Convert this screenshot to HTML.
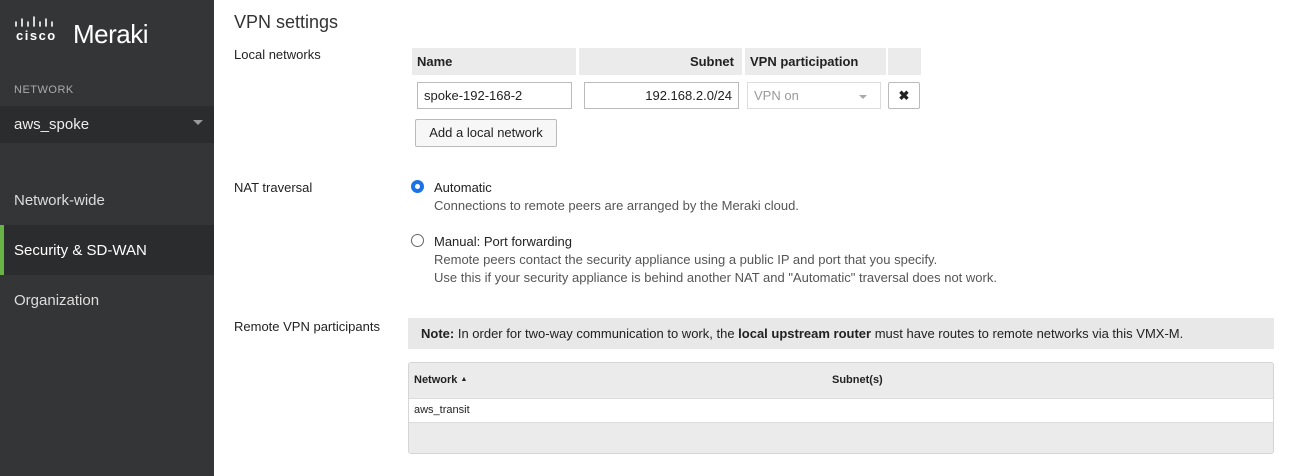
<!DOCTYPE html>
<html><head><style>
*{box-sizing:border-box;margin:0;padding:0}
body{width:1292px;height:476px;overflow:hidden;background:#fff;font-family:"Liberation Sans",sans-serif;font-size:13px;color:#222;position:relative}
.sb{position:absolute;left:0;top:0;width:214px;height:476px;background:#343537;color:#ddd}
.abs{position:absolute}
.lbl{position:absolute;left:234px;font-size:13px;color:#222}
.inp{position:absolute;height:27px;border:1px solid #bbb;background:#fff;font-size:13px;line-height:25px;padding:0 6px}
</style></head><body>
<div class="sb">
  <svg class="abs" style="left:15px;top:16px" width="46" height="12" viewBox="0 0 46 12">
    <g stroke="#fff" stroke-width="1.6" stroke-linecap="round">
      <line x1="1" y1="6" x2="1" y2="10"/><line x1="7" y1="3" x2="7" y2="10"/><line x1="13" y1="6" x2="13" y2="10"/><line x1="19" y1="1" x2="19" y2="10"/><line x1="25" y1="6" x2="25" y2="10"/><line x1="31" y1="3" x2="31" y2="10"/><line x1="37" y1="6" x2="37" y2="10"/>
    </g>
  </svg>
  <div class="abs" style="left:16px;top:28px;font-size:13px;font-weight:bold;color:#fff;letter-spacing:1.5px">cisco</div>
  <div class="abs" style="left:73px;top:19px;font-size:26px;color:#fff;font-weight:300;letter-spacing:-.5px">Meraki</div>
  <div class="abs" style="left:14px;top:84px;font-size:11px;color:#aaa;letter-spacing:.5px">NETWORK</div>
  <div class="abs" style="left:0;top:106px;width:214px;height:37px;background:#2b2c2e"></div>
  <div class="abs" style="left:14px;top:116px;font-size:15px;color:#eee">aws_spoke</div>
  <div class="abs" style="left:193px;top:120px;width:0;height:0;border-left:5px solid transparent;border-right:5px solid transparent;border-top:5px solid #999"></div>
  <div class="abs" style="left:14px;top:192px;font-size:15px;color:#ddd">Network-wide</div>
  <div class="abs" style="left:0;top:225px;width:214px;height:50px;background:#2b2c2e;border-left:4px solid #67b346"></div>
  <div class="abs" style="left:14px;top:242px;font-size:15px;color:#fff">Security &amp; SD-WAN</div>
  <div class="abs" style="left:14px;top:292px;font-size:15px;color:#ddd">Organization</div>
</div>
<div class="abs" style="left:234px;top:12px;font-size:18px;color:#333">VPN settings</div>
<div class="lbl" style="top:47px">Local networks</div>
<div class="abs" style="left:412px;top:48px;width:164px;height:27px;background:#ebebeb;font-weight:bold;padding:6px 5px">Name</div>
<div class="abs" style="left:579px;top:48px;width:163px;height:27px;background:#ebebeb;font-weight:bold;padding:6px 8px;text-align:right">Subnet</div>
<div class="abs" style="left:745px;top:48px;width:141px;height:27px;background:#ebebeb;font-weight:bold;padding:6px 5px">VPN participation</div>
<div class="abs" style="left:888px;top:48px;width:33px;height:27px;background:#ebebeb"></div>
<div class="inp" style="left:417px;top:82px;width:155px">spoke-192-168-2</div>
<div class="inp" style="left:584px;top:82px;width:155px;text-align:right">192.168.2.0/24</div>
<div class="inp" style="left:747px;top:82px;width:134px;color:#999;border-color:#ddd">VPN on</div>
<div class="abs" style="left:859px;top:95px;border-left:4px solid transparent;border-right:4px solid transparent;border-top:4px solid #aaa"></div>
<div class="inp" style="left:888px;top:82px;width:32px;text-align:center;font-weight:bold;border-radius:2px">✖</div>
<div class="inp" style="left:415px;top:119px;width:142px;height:28px;text-align:center;background:#f7f7f7;border-radius:2px;line-height:26px">Add a local network</div>
<div class="lbl" style="top:180px">NAT traversal</div>
<div class="abs" style="left:411px;top:180px;width:13px;height:13px;border-radius:50%;background:#1a73e8;border:1px solid #1a73e8"><div style="width:5px;height:5px;background:#fff;border-radius:50%;margin:3px"></div></div>
<div class="abs" style="left:434px;top:180px">Automatic</div>
<div class="abs" style="left:434px;top:198px;color:#555">Connections to remote peers are arranged by the Meraki cloud.</div>
<div class="abs" style="left:411px;top:234px;width:13px;height:13px;border-radius:50%;border:1px solid #666;background:#fff"></div>
<div class="abs" style="left:434px;top:234px">Manual: Port forwarding</div>
<div class="abs" style="left:434px;top:252px;color:#555">Remote peers contact the security appliance using a public IP and port that you specify.</div>
<div class="abs" style="left:434px;top:270px;color:#555">Use this if your security appliance is behind another NAT and "Automatic" traversal does not work.</div>
<div class="lbl" style="top:319px">Remote VPN participants</div>
<div class="abs" style="left:408px;top:318px;width:866px;height:31px;background:#e8e8e8;padding:8px 13px"><b>Note:</b> In order for two-way communication to work, the <b>local upstream router</b> must have routes to remote networks via this VMX-M.</div>
<div class="abs" style="left:408px;top:362px;width:866px;height:92px;border:1px solid #d5d5d5;border-radius:3px;background:#ebebeb;font-size:11px">
  <div class="abs" style="left:5px;top:11px;font-weight:bold">Network <span style="font-size:7px;vertical-align:2px">▲</span></div>
  <div class="abs" style="left:423px;top:11px;font-weight:bold">Subnet(s)</div>
  <div class="abs" style="left:0;top:35px;width:864px;height:25px;background:#fff;border-top:1px solid #ddd;border-bottom:1px solid #ddd;padding:5px 5px">aws_transit</div>
</div>
</body></html>
